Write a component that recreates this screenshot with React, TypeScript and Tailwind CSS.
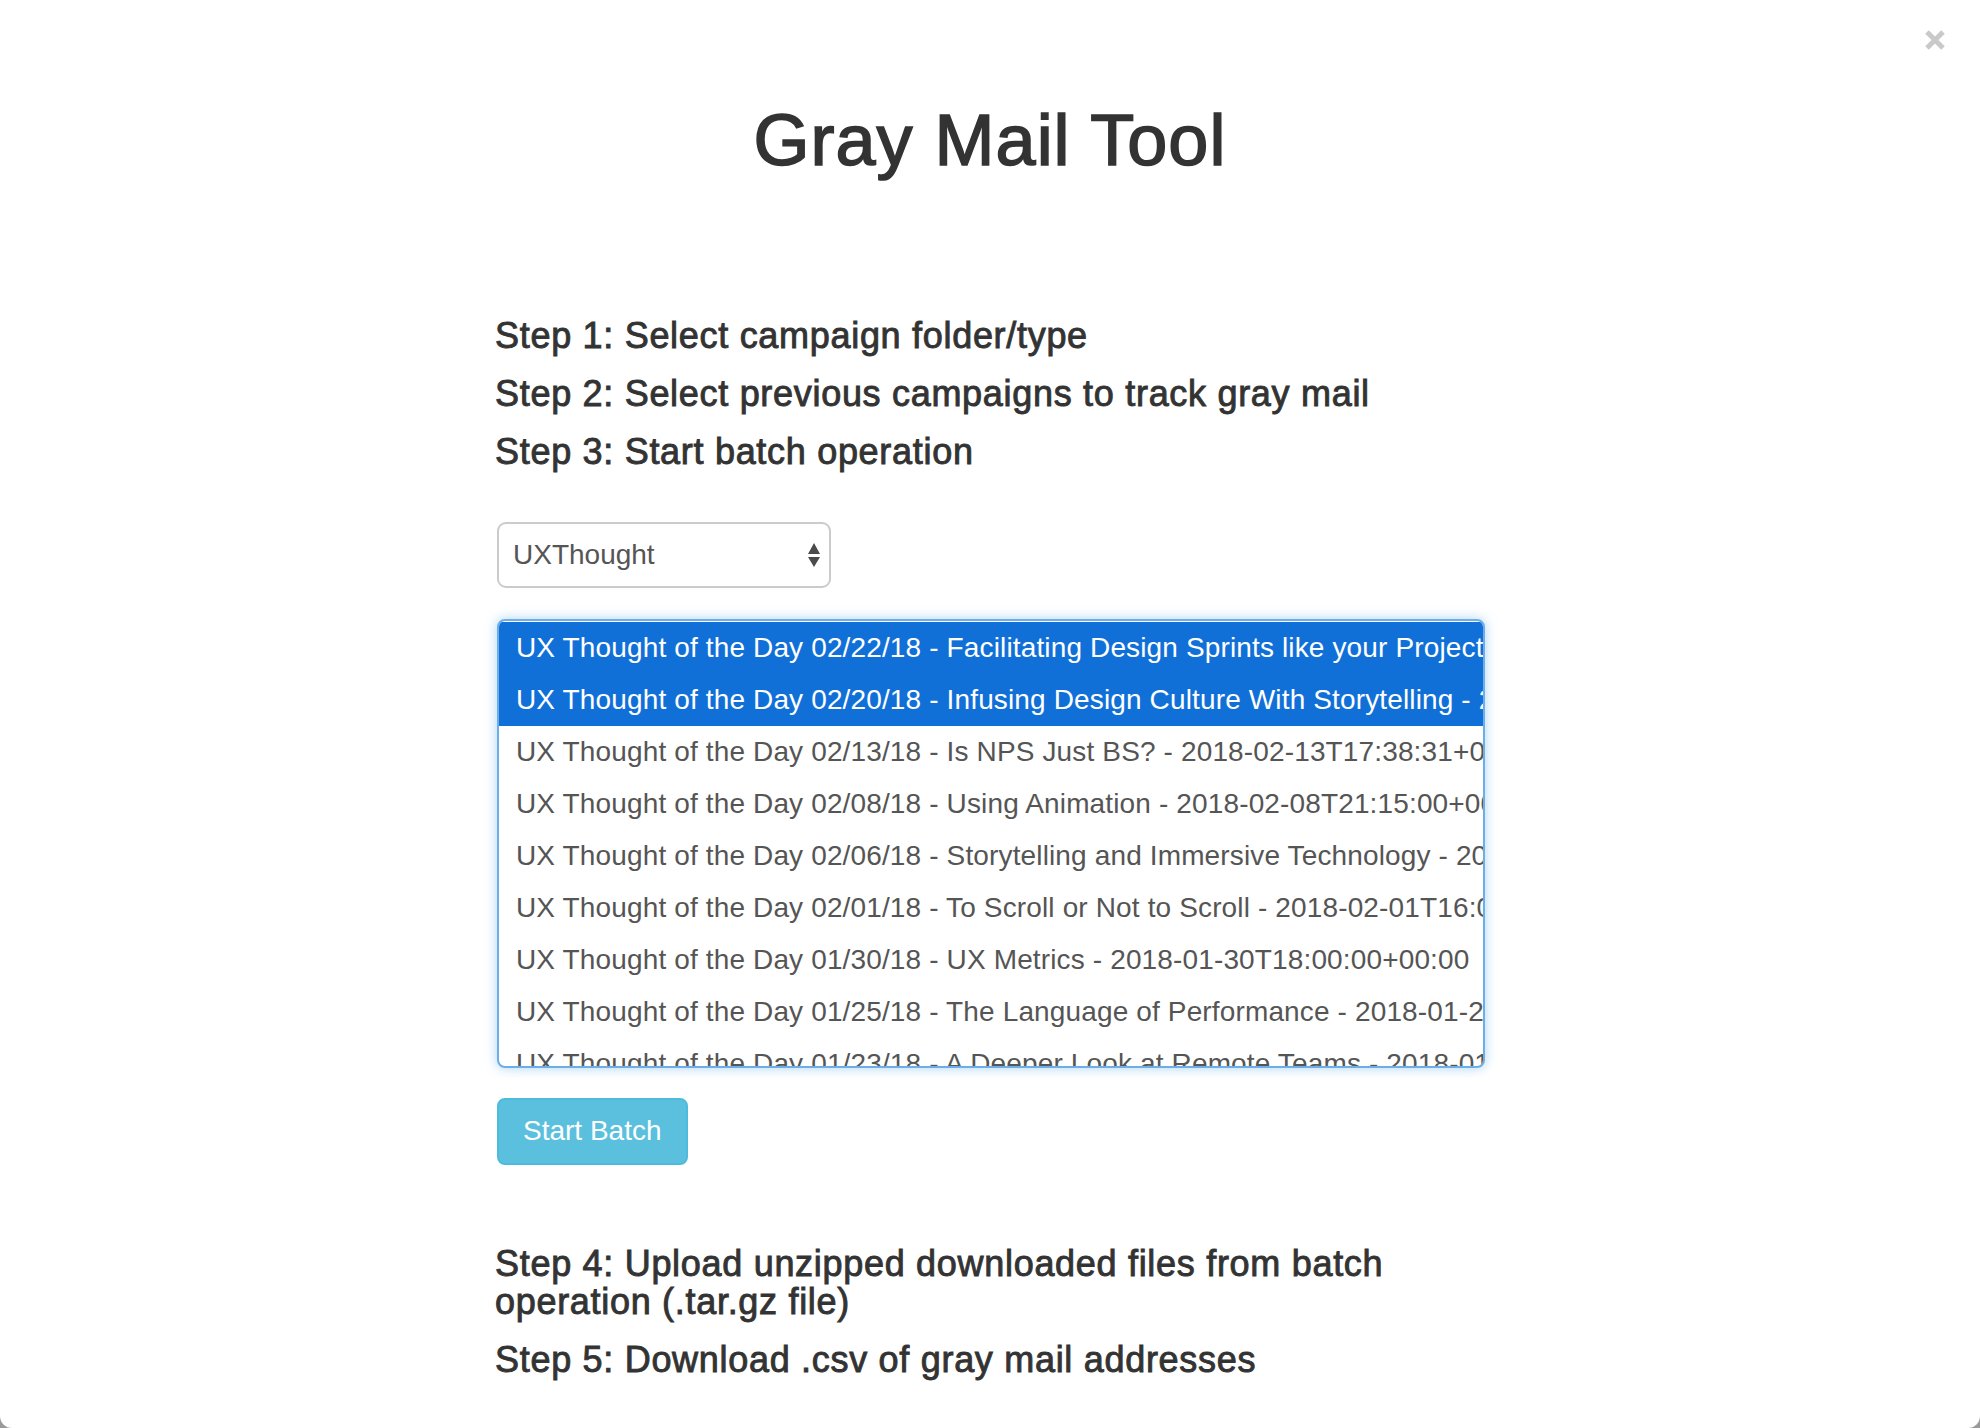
import React from "react";

const rows = [
  "UX Thought of the Day 02/22/18 - Facilitating Design Sprints like your Project Manager - 2018-02-22T17:00:00+00:00",
  "UX Thought of the Day 02/20/18 - Infusing Design Culture With Storytelling - 2018-02-20T17:00:00+00:00",
  "UX Thought of the Day 02/13/18 - Is NPS Just BS? - 2018-02-13T17:38:31+00:00",
  "UX Thought of the Day 02/08/18 - Using Animation - 2018-02-08T21:15:00+00:00",
  "UX Thought of the Day 02/06/18 - Storytelling and Immersive Technology - 2018-02-06T17:00:00+00:00",
  "UX Thought of the Day 02/01/18 - To Scroll or Not to Scroll - 2018-02-01T16:00:00+00:00",
  "UX Thought of the Day 01/30/18 - UX Metrics - 2018-01-30T18:00:00+00:00",
  "UX Thought of the Day 01/25/18 - The Language of Performance - 2018-01-25T17:00:00+00:00",
  "UX Thought of the Day 01/23/18 - A Deeper Look at Remote Teams - 2018-01-23T17:00:00+00:00",
];

export default function App() {
  return (
    <div className="w-full h-[1428px] bg-[#9a9a9a] overflow-hidden" style={{ fontFamily: '"Liberation Sans", Arial, sans-serif' }}>
      <div className="relative h-full bg-white rounded-b-[12px] pt-[100px]">
        <button className="absolute left-[1924px] top-[29px] w-[22px] h-[22px]" aria-label="Close">
          <svg width="22" height="22" viewBox="0 0 22 22">
            <path d="M3 3 L19 19 M19 3 L3 19" stroke="#c9c9c9" strokeWidth="5" strokeLinecap="butt" />
          </svg>
        </button>

        <h1 className="text-center text-[72px] leading-[80px] tracking-[1px] text-[#333] [-webkit-text-stroke:1.6px_#333]">Gray Mail Tool</h1>

        <div className="w-[990px] mx-auto mt-[138px] flex flex-col">
          <div className="flex flex-col gap-[22px] text-[36px] leading-[36px] tracking-[0.7px] text-[#333] [-webkit-text-stroke:0.9px_#333]">
            <h4>Step 1: Select campaign folder/type</h4>
            <h4>Step 2: Select previous campaigns to track gray mail</h4>
            <h4>Step 3: Start batch operation</h4>
          </div>

          <div className="mt-[51.5px] ml-[2px] w-[334px] h-[66px] border-2 border-[#cbcbcb] rounded-[9px] bg-white flex items-center justify-between pl-[14px] pr-[8px] text-[28px] text-[#555]">
            <span>UXThought</span>
            <svg width="14" height="28" viewBox="0 0 14 28">
              <path d="M1 13 L7 2 L13 13 Z" fill="#4b4b4b" />
              <path d="M1 16 L13 16 L7 26 Z" fill="#4b4b4b" />
            </svg>
          </div>

          <div className="mt-[31px] ml-[2px] w-[988px] h-[449px] border-2 border-[#6aaeea] rounded-[8px] overflow-hidden pt-[1px] shadow-[0_0_12px_rgba(102,175,233,0.55)] bg-white">
            {rows.map((r, i) => (
              <div
                key={i}
                className={
                  i < 2
                    ? "h-[52px] flex items-center pl-[17px] whitespace-nowrap text-[28px] tracking-[0.14px] bg-[#1170d8] text-white"
                    : "h-[52px] flex items-center pl-[17px] whitespace-nowrap text-[28px] tracking-[0.14px] text-[#555]"
                }
              >
                {r}
              </div>
            ))}
          </div>

          <div className="mt-[30px] ml-[2px]">
            <button className="h-[67px] px-[24px] border-2 border-[#4fbbdc] bg-[#5bc0de] rounded-[8px] text-white text-[28px] leading-none">
              Start Batch
            </button>
          </div>

          <div className="mt-[80px] flex flex-col gap-[20px] text-[36px] leading-[38px] tracking-[0.7px] text-[#333] [-webkit-text-stroke:0.9px_#333]">
            <h4>Step 4: Upload unzipped downloaded files from batch operation (.tar.gz file)</h4>
            <h4>Step 5: Download .csv of gray mail addresses</h4>
          </div>
        </div>
      </div>
    </div>
  );
}
